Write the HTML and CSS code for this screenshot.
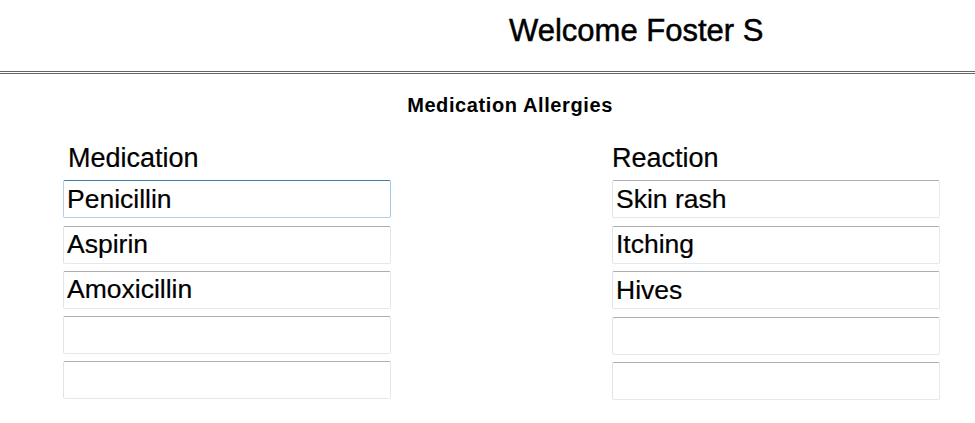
FILE: index.html
```html
<!DOCTYPE html>
<html>
<head>
    <meta charset="UTF-8">
    <title>Medication Allergies</title>
    <link rel="stylesheet" href="styles.css">
</head>
<body>
<div class="header">
    <h1>Welcome Foster S</h1>
</div>
<hr class="rule"/>

<h2 class="section-title">Medication Allergies</h2>

<div class="columns">
    <div class="col">
        <div class="label label-med">Medication</div>
        <input type="text" class="field focus" value="Penicillin"/>
        <input type="text" class="field" value="Aspirin"/>
        <input type="text" class="field" value="Amoxicillin"/>
        <input type="text" class="field" value=""/>
        <input type="text" class="field" value=""/>
    </div>
    <div class="col col-right">
        <div class="label label-react">Reaction</div>
        <input type="text" class="field" value="Skin rash"/>
        <input type="text" class="field" value="Itching"/>
        <input type="text" class="field" value="Hives"/>
        <input type="text" class="field" value=""/>
        <input type="text" class="field" value=""/>
    </div>
</div>
</body>
</html>
```

FILE: styles.css
```css
body, div, h1, h2, hr, input {
    margin: 0;
    padding: 0;
    font-family: "Liberation Sans", Arial, Helvetica, sans-serif;
}

body {
    background: #fff;
    color: #000;
}

.header {
    padding: 14px 0 0 509px;
}

.header h1 {
    font-size: 31px;
    font-weight: normal;
    line-height: 34px;
    -webkit-text-stroke: 0.5px #000;
}

.rule {
    margin-top: 23px;
    height: 0;
    border: 0;
    border-top: 3px double #666;
}

.section-title {
    margin-top: 20px;
    padding-left: 45px;
    font-size: 20px;
    font-weight: bold;
    line-height: 23px;
    letter-spacing: 0.6px;
    text-align: center;
}

.columns {
    display: grid;
    grid-template-columns: 328px 328px;
    column-gap: 221px;
    margin-top: 26px;
    padding-left: 63px;
}

.col {
    display: flex;
    flex-direction: column;
    gap: 7.3px;
}

.col-right {
    gap: 7.6px;
}

.col-right .label {
    margin-bottom: -0.6px;
}

.label {
    font-size: 27px;
    line-height: 30px;
    -webkit-text-stroke: 0.2px #000;
}

.label-med {
    padding-left: 5px;
}

.label-react {
    padding-left: 0;
}

.field {
    display: block;
    box-sizing: border-box;
    width: 328px;
    height: 38px;
    padding: 0 3px;
    font-size: 26.5px;
    color: #000;
    background: #fff;
    border: 1px solid;
    border-color: #abadb3 #e3e9ef #e3e9ef #e2e3ea;
    border-radius: 2px;
    outline: none;
    -webkit-text-stroke: 0.2px #000;
}

.field.focus {
    border-color: #3d7bad #a4c9e3 #b5cfe7 #b5cfe7;
}
```
